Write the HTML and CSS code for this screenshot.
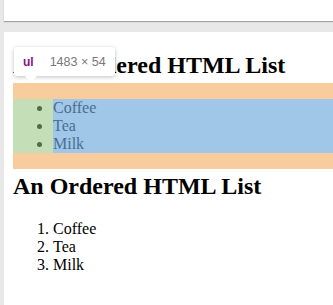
FILE: index.html
```html
<!DOCTYPE html>
<html>
    <head>
        <meta charset="UTF-8">
        <title>HTML Lists</title>
        <link rel="stylesheet" href="styles.css">
    </head>
    <body>
        <div class="browser-toolbar"></div>
        <div class="browser-page">
            <h2>An Unordered HTML List</h2>
            <div class="inspect-margin">
                <ul class="inspect-list">
                    <li>Coffee</li>
                    <li>Tea</li>
                    <li>Milk</li>
                </ul>
            </div>
            <h2>An Ordered HTML List</h2>
            <ol>
                <li>Coffee</li>
                <li>Tea</li>
                <li>Milk</li>
            </ol>
        </div>
        <div class="inspect-tooltip">
            <span class="inspect-tag">ul</span>
            <span class="inspect-size">1483 × 54</span>
        </div>
    </body>
</html>
```

FILE: styles.css
```css
* {
    box-sizing: border-box;
}

html, body {
    height: 100%;
    width: 100%;
    overflow: hidden;
}

body {
    margin: 0;
    padding-left: 4px;
    background-color: #e8e8e9;
    display: flex;
    flex-direction: column;
    font-family: "Liberation Serif", "Times New Roman", serif;
    font-size: 16px;
}

.browser-toolbar {
    height: 21px;
    flex-shrink: 0;
    background-color: #fff;
    box-shadow: 0 1px 1px rgba(0, 0, 0, 0.3);
}

.browser-page {
    display: flow-root;
    flex: 1;
    margin-top: 11px;
    padding-left: 9px;
    background-color: #fff;
}

.browser-page h2 {
    font-size: 24px;
    margin: 19.92px 0;
}

.browser-page ol {
    margin: 16px 0;
    padding-left: 40px;
}

.browser-page li {
    line-height: 18px;
}

/* devtools highlight of the ul */
.inspect-margin {
    margin: -16px 0;
    padding: 16px 0;
    background-color: #f9cc9d;
}

.inspect-list {
    margin: 0;
    padding-left: 40px;
    background-color: #c4dfb8;
    color: #496f91;
}

.inspect-list li {
    background-color: #a0c6e8;
}

.inspect-list li::marker {
    color: #516c45;
}

.inspect-tooltip {
    position: absolute;
    left: 14px;
    top: 47px;
    width: 101px;
    height: 29px;
    padding-left: 9px;
    display: flex;
    align-items: center;
    gap: 16px;
    background-color: #fff;
    border-radius: 3px;
    box-shadow: 0 1px 4px rgba(0, 0, 0, 0.25);
    font-family: "Liberation Sans", Arial, sans-serif;
    font-size: 12.5px;
}

.inspect-tooltip::after {
    content: "";
    position: absolute;
    left: 11px;
    top: 29px;
    border-left: 6px solid transparent;
    border-right: 6px solid transparent;
    border-top: 7px solid #fff;
}

.inspect-tag {
    color: #881280;
    font-weight: bold;
    font-size: 12px;
}

.inspect-size {
    color: #777;
}
```
